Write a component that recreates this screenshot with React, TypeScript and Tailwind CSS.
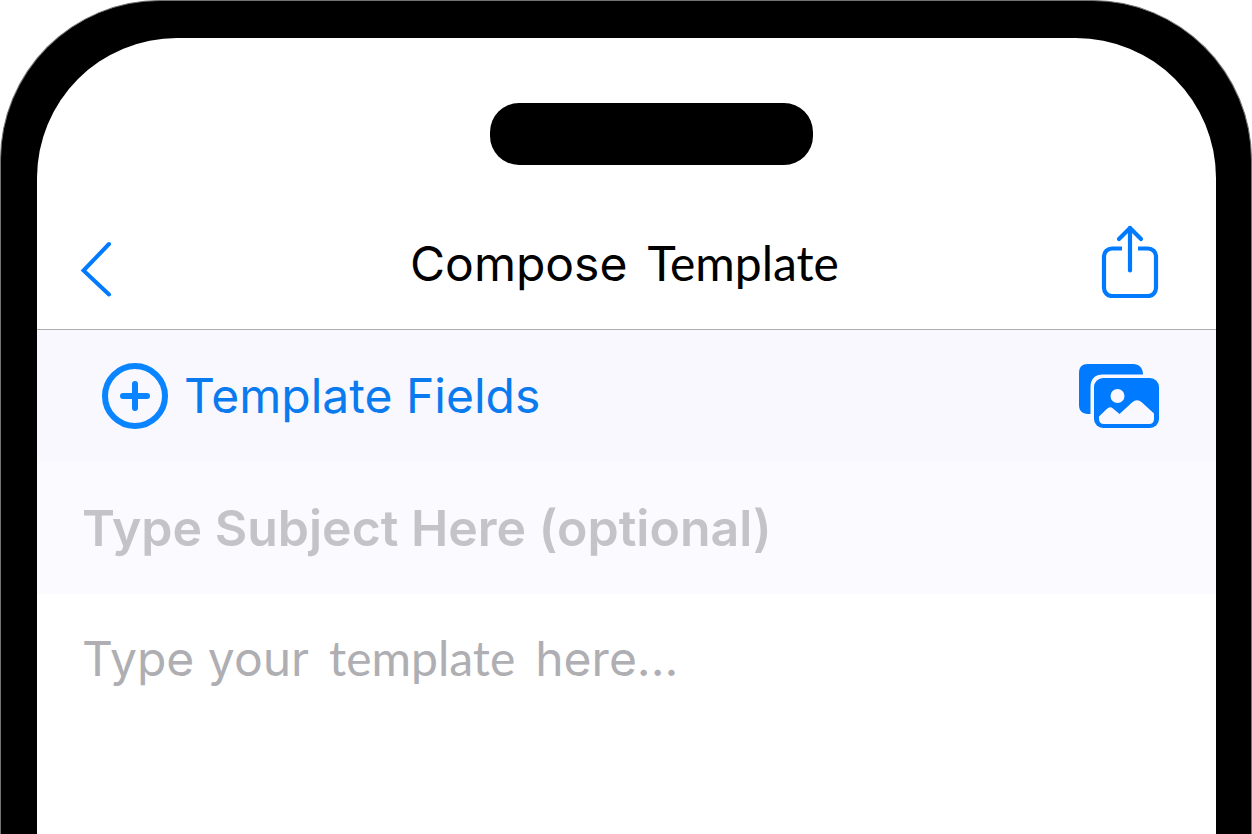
import { useState } from "react";

const ChevronLeftIcon: React.FC = () => (
    <svg width="40" height="74" viewBox="0 0 40 74" fill="none" stroke="#007aff" strokeWidth="4" strokeLinecap="round" strokeLinejoin="miter" aria-hidden="true">
        <path d="M32 20 L6.500 46.500 L32 70.500" />
    </svg>
);

const ShareIcon: React.FC = () => (
    <svg width="58" height="74" viewBox="0 0 58 74" fill="none" stroke="#007aff" strokeWidth="4.200" strokeLinecap="round" strokeLinejoin="round" aria-hidden="true">
        <path d="M21 24.500 H11 A8 8 0 0 0 3 32.500 V64 A8 8 0 0 0 11 72 H47 A8 8 0 0 0 55 64 V32.500 A8 8 0 0 0 47 24.500 H37" strokeLinecap="butt" />
        <path d="M29 46.500 V4" />
        <path d="M18 15 L29 4 L40 15" />
    </svg>
);

const PlusCircleIcon: React.FC = () => (
    <svg width="66" height="66" viewBox="0 0 66 66" fill="none" stroke="#0a84ff" strokeLinecap="round" strokeWidth="6" aria-hidden="true">
        <circle cx="33" cy="33" r="30" />
        <path d="M33 21 V45 M21 33 H45" />
    </svg>
);

const PhotosIcon: React.FC = () => (
    <svg width="80" height="65" viewBox="0 0 80 65" aria-hidden="true">
        {/* back photo */}
        <path fill="#007aff" d="M9 0 H54 C60 0 64 4 64 10.500 H24 C16 10.500 11.500 15 11.500 23 V50 H9 C3 50 0 46.500 0 41 V9 C0 3 3 0 9 0 Z" />
        {/* front photo */}
        <rect x="15" y="14" width="65" height="50" rx="9" fill="#007aff" />
        <circle cx="38.500" cy="32" r="7" fill="#f8f8fe" />
        <path fill="#f8f8fe" d="M20 52.500 L28 44.800 Q31 41.800 34 44.500 L40.500 50 L53 38.500 Q58 34 63 38.500 L75 49.500 V55 Q75 60 70 60 H25 Q20 60 20 55 Z" />
    </svg>
);

const App: React.FC = () => {
    const [subject, setSubject] = useState("");
    const [body, setBody] = useState("");

    return (
        <div className="min-h-screen flex flex-col bg-white font-['Inter',sans-serif]">
            {/* Phone frame */}
            <div className="flex-1 flex flex-col rounded-t-[160px] border-x border-t border-neutral-500 bg-black pt-[37px] pl-9 pr-[35px]">
                <main className="flex-1 flex flex-col overflow-hidden rounded-t-[140px] bg-white">
                    <header className="border-b border-[#adadb0]">
                        <div className="flex justify-center pt-[65px] pl-[50px]">
                            <div className="h-[62px] w-[323px] rounded-[29px] bg-black" />
                        </div>
                        <nav className="grid grid-cols-[1fr_auto_1fr] items-center pl-10 pr-[57px] pt-[59px] pb-[31px]">
                            <button type="button" aria-label="Back" className="justify-self-start">
                                <ChevronLeftIcon />
                            </button>
                            <h1 className="flex items-baseline gap-5 pt-1 pl-[13px] text-5xl leading-[66px] text-black">
                                <span>Compose</span>
                                <span className="font-['Lato',sans-serif]">Template</span>
                            </h1>
                            <button type="button" aria-label="Share" className="justify-self-end">
                                <ShareIcon />
                            </button>
                        </nav>
                    </header>

                    {/* Toolbar */}
                    <div className="flex h-[132px] items-center justify-between bg-[#f8f8fe] pl-[65px] pr-[57px]">
                        <button type="button" className="flex items-center gap-4 text-5xl leading-[66px] text-[#0a7aef]">
                            <PlusCircleIcon />
                            Template Fields
                        </button>
                        <button type="button" aria-label="Photos">
                            <PhotosIcon />
                        </button>
                    </div>

                    {/* Subject */}
                    <input
                        type="text"
                        aria-label="Subject"
                        value={subject}
                        onChange={(e) => setSubject(e.target.value)}
                        placeholder="Type Subject Here (optional)"
                        className="h-[132px] w-full bg-[#fafaff] px-[45px] text-[50px] font-semibold text-black outline-none placeholder:text-[#c3c3c8]"
                    />

                    {/* Message */}
                    <div className="grid flex-1 px-[45px] pt-[31px] text-5xl leading-[66px]">
                        {body === "" && (
                            <label htmlFor="body" className="pointer-events-none col-start-1 row-start-1 flex items-baseline gap-5 self-start text-[#aeaeb3]">
                                <span>Type your</span>
                                <span className="font-['Lato',sans-serif]">template</span>
                                <span>here...</span>
                            </label>
                        )}
                        <textarea
                            id="body"
                            value={body}
                            onChange={(e) => setBody(e.target.value)}
                            className="col-start-1 row-start-1 h-full w-full resize-none bg-transparent text-black outline-none"
                        />
                    </div>
                </main>
            </div>
        </div>
    );
};

export default App;
